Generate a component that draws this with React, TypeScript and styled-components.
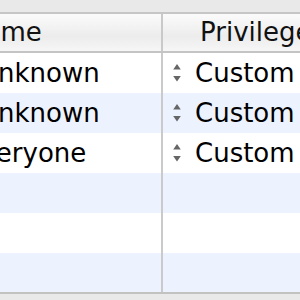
import React from "react";
import styled, { createGlobalStyle } from "styled-components";

const GlobalStyle = createGlobalStyle`
    html, body {
        margin: 0;
        padding: 0;
        background: #e9e9e9;
    }
`;

const Wrapper = styled.div`
    width: 300px;
    height: 300px;
    overflow: hidden;
    padding-top: 12px;
    box-sizing: border-box;
    background: #e9e9e9;
    font-family: "DejaVu Sans", "Liberation Sans", sans-serif;
`;

const Table = styled.div`
    margin-left: -40px;
    width: 400px;
    border-top: solid 2px #c6c6c6;
    border-bottom: solid 2px #c2c2c2;
    background: #fff;
`;

const HeaderRow = styled.div`
    display: grid;
    grid-template-columns: 203px 1fr;
    height: 37px;
    border-bottom: solid 2px #c4c4c4;
    background: linear-gradient(#fbfbfb 0%, #f0f0f0 45%, #ececec 60%, #f6f6f6 100%);
`;

const HeaderCell = styled.div<{ $pad: number }>`
    display: flex;
    align-items: center;
    padding-left: ${(p) => p.$pad}px;
    padding-bottom: 2px;
    font-size: 26px;
    color: #111;
    white-space: nowrap;
    overflow: hidden;
    &:first-child {
        border-right: solid 2px #c9c9c9;
    }
`;

const Row = styled.div<{ $alt: boolean; $h?: number }>`
    display: grid;
    grid-template-columns: 203px 1fr;
    height: ${(p) => p.$h ?? 40}px;
    background: ${(p) => (p.$alt ? "#edf3fe" : "#ffffff")};
`;

const NameCell = styled.div<{ $pad: number }>`
    display: flex;
    align-items: center;
    padding-left: ${(p) => p.$pad}px;
    border-right: solid 2px #cacaca;
    font-size: 26px;
    color: #000;
    white-space: nowrap;
    overflow: hidden;
`;

const PrivCell = styled.div`
    display: flex;
    align-items: center;
    padding-left: 10px;
    gap: 14px;
    font-size: 26px;
    color: #000;
    white-space: nowrap;
`;

const Stepper = () => (
    <svg width="8" height="18" viewBox="0 0 8 18">
        <path d="M4 0 L7.8 5.5 L0.2 5.5 Z" fill="#666" />
        <path d="M4 17.5 L7.8 12 L0.2 12 Z" fill="#666" />
    </svg>
);

const rows = [
    { name: "Unknown", pad: 19, priv: "Custom" },
    { name: "Unknown", pad: 19, priv: "Custom" },
    { name: "Everyone", pad: 4, priv: "Custom" },
    { name: "", pad: 0, priv: "" },
    { name: "", pad: 0, priv: "" },
    { name: "", pad: 0, priv: "" },
];

const App = () => {
    return (
        <Wrapper>
            <GlobalStyle />
            <Table>
                <HeaderRow>
                    <HeaderCell $pad={5}>Name</HeaderCell>
                    <HeaderCell $pad={37}>Privileges</HeaderCell>
                </HeaderRow>
                {rows.map((r, i) => (
                    <Row key={i} $alt={i % 2 === 1} $h={i === rows.length - 1 ? 39 : 40}>
                        <NameCell $pad={r.pad}>{r.name}</NameCell>
                        <PrivCell>
                            {r.priv && (
                                <>
                                    <Stepper />
                                    <span>{r.priv}</span>
                                </>
                            )}
                        </PrivCell>
                    </Row>
                ))}
            </Table>
        </Wrapper>
    );
};

export default App;
